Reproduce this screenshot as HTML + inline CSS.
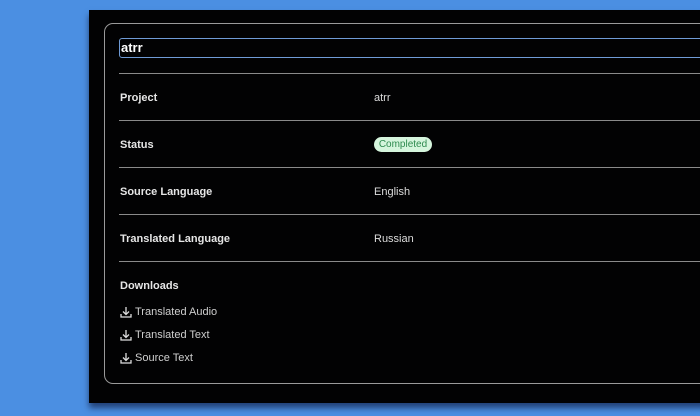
<!DOCTYPE html>
<html><head><style>
body{margin:0;width:700px;height:416px;background:#4b8fe2;overflow:hidden;font-family:"Liberation Sans",sans-serif;position:relative}
.panel{position:absolute;left:89px;top:10px;width:640px;height:393px;background:#020203;box-shadow:0 5px 6px rgba(0,0,30,.55)}
.card{position:absolute;left:104px;top:23px;width:640px;height:359px;border:1px solid #9a9a9a;border-radius:9px}
.input{position:absolute;left:119px;top:38px;width:620px;height:20px;border:1.5px solid #6f9bd6;border-radius:3px;color:#fff;font-weight:bold;font-size:13px;line-height:18px;padding-left:1px;box-sizing:border-box}
.line{position:absolute;left:119px;width:600px;height:1px;background:#8a8a8a}
.lbl{position:absolute;left:120px;color:#e6e6e6;font-size:11px;font-weight:bold;line-height:14px}
.val{position:absolute;left:374px;color:#ddd;font-size:11px;line-height:14px}
.badge{position:absolute;left:374px;top:137px;width:58px;height:15px;border-radius:8px;background:#d5f5dd;color:#2e8a4f;font-size:10px;line-height:15px;text-align:center}
.dl{position:absolute;left:120px;color:#cfcfcf;font-size:11px;line-height:14px;display:flex;align-items:center;gap:3px}
</style></head><body>
<div class="panel"></div>
<div class="card"></div>
<div class="input">atrr</div>
<div class="line" style="top:73px"></div>
<div class="line" style="top:120px"></div>
<div class="line" style="top:167px"></div>
<div class="line" style="top:214px"></div>
<div class="line" style="top:261px"></div>
<div class="lbl" style="top:91px">Project</div><div class="val" style="top:91px">atrr</div>
<div class="lbl" style="top:138px">Status</div><div class="badge">Completed</div>
<div class="lbl" style="top:185px">Source Language</div><div class="val" style="top:185px">English</div>
<div class="lbl" style="top:232px">Translated Language</div><div class="val" style="top:232px">Russian</div>
<div class="lbl" style="top:279px">Downloads</div>
<div class="dl" style="top:305px"><svg width="12" height="12" viewBox="0 0 12 12" fill="none" stroke="#ddd" stroke-width="1.3"><path d="M6 1v7M3 5.5l3 3 3-3M1 8v3h10V8"/></svg>Translated Audio</div>
<div class="dl" style="top:328px"><svg width="12" height="12" viewBox="0 0 12 12" fill="none" stroke="#ddd" stroke-width="1.3"><path d="M6 1v7M3 5.5l3 3 3-3M1 8v3h10V8"/></svg>Translated Text</div>
<div class="dl" style="top:351px"><svg width="12" height="12" viewBox="0 0 12 12" fill="none" stroke="#ddd" stroke-width="1.3"><path d="M6 1v7M3 5.5l3 3 3-3M1 8v3h10V8"/></svg>Source Text</div>
</body></html>
